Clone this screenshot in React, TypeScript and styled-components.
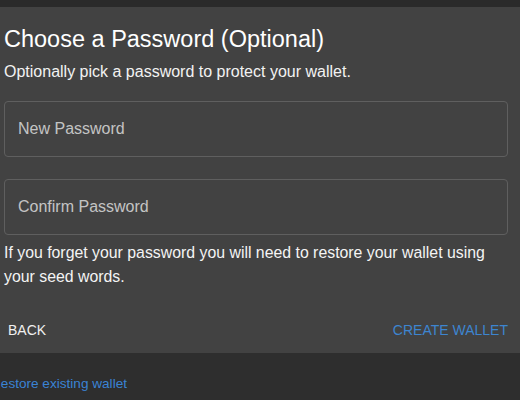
import React from 'react';
import styled, { createGlobalStyle } from 'styled-components';

const GlobalStyle = createGlobalStyle`
  html, body {
    margin: 0;
    padding: 0;
    background: #2e2e2e;
    font-family: "Liberation Sans", Arial, sans-serif;
    overflow: hidden;
  }
`;

const Page = styled.div`
  width: 520px;
  height: 400px;
  display: flex;
  flex-direction: column;
  background: #2e2e2e;
  overflow: hidden;
`;

const TopStrip = styled.div`
  height: 7px;
  background: #2a2a2a;
`;

const Card = styled.section`
  background: #424242;
  padding: 18px 4px 5px 4px;
  display: flex;
  flex-direction: column;
`;

const Title = styled.h1`
  margin: 0 0 7px;
  font-size: 23.5px;
  font-weight: 400;
  line-height: 28px;
  color: #ffffff;
`;

const Subtitle = styled.p`
  margin: 0 0 17px;
  font-size: 16px;
  line-height: 24px;
  color: #f2f2f2;
`;

const Field = styled.input<{ $gap: number }>`
  box-sizing: border-box;
  height: 56px;
  margin: 0 8px ${(p) => p.$gap}px 0;
  padding: 0 13px;
  border: 1px solid #5f5f5f;
  border-radius: 4px;
  background: transparent;
  color: #ffffff;
  font-family: inherit;
  font-size: 16px;
  outline: none;

  &::placeholder {
    color: rgba(255, 255, 255, 0.7);
  }
`;

const Helper = styled.p`
  margin: 0 0 23px;
  font-size: 15.85px;
  line-height: 24px;
  color: #f4f4f4;
`;

const Actions = styled.div`
  display: flex;
  justify-content: space-between;
  align-items: center;
  margin-left: -4px;
`;

const TextButton = styled.button<{ $primary?: boolean }>`
  height: 36px;
  padding: 0 8px;
  border: none;
  background: transparent;
  font-family: inherit;
  font-size: 14px;
  text-transform: uppercase;
  color: ${(p) => (p.$primary ? '#3d85d0' : '#f0f0f0')};
  cursor: pointer;
`;

const Footer = styled.div`
  padding-top: 21px;
`;

const Link = styled.a`
  display: block;
  margin-left: -9px;
  font-size: 13.6px;
  line-height: 20px;
  color: #3a83d4;
  text-decoration: none;
`;

export default function App() {
  return (
    <>
      <GlobalStyle />
      <Page>
        <TopStrip />
        <Card>
          <Title>Choose a Password (Optional)</Title>
          <Subtitle>Optionally pick a password to protect your wallet.</Subtitle>
          <Field type="password" placeholder="New Password" $gap={22} />
          <Field type="password" placeholder="Confirm Password" $gap={6} />
          <Helper>
            If you forget your password you will need to restore your wallet using
            your seed words.
          </Helper>
          <Actions>
            <TextButton>Back</TextButton>
            <TextButton $primary>Create Wallet</TextButton>
          </Actions>
        </Card>
        <Footer>
          <Link href="#">Restore existing wallet</Link>
        </Footer>
      </Page>
    </>
  );
}
